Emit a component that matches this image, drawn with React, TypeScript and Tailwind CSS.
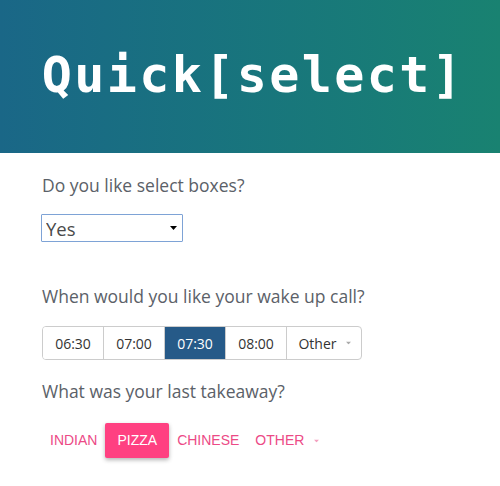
import React, { useState } from 'react';

const times = ['06:30', '07:00', '07:30', '08:00'];
const foods = ['Indian', 'Pizza', 'Chinese'];

const Caret = ({ className }: { className: string }) => (
  <svg width="7" height="4" viewBox="0 0 7 4" className={className}>
    <path d="M0 0 L7 0 L3.5 4 Z" fill="currentColor" />
  </svg>
);

export default function App() {
  const [answer, setAnswer] = useState('Yes');
  const [time, setTime] = useState('07:30');
  const [food, setFood] = useState('Pizza');

  return (
    <div className="w-[500px] h-[486px] bg-white overflow-hidden" style={{ fontFamily: '"Open Sans", sans-serif' }}>
      {/* header */}
      <div className="h-[153px] bg-gradient-to-r from-[#1a6787] to-[#198271] flex items-center justify-center">
        <h1
          className="text-white text-[50px] font-bold tracking-[2.4px] leading-none pb-[4px] pl-[6px]"
          style={{ fontFamily: '"DejaVu Sans Mono", monospace' }}
        >
          Quick[select]
        </h1>
      </div>

      <div className="px-[42px] pt-[20px] text-[#5b6168]">
        {/* select box */}
        <p className="text-[17.5px] leading-[24px]">Do you like select boxes?</p>
        <div className="relative mt-[17px] w-[142px] h-[28px] border border-[#7ea3d6] rounded-[1px] -ml-[1px]">
          <select
            value={answer}
            onChange={(e) => setAnswer(e.target.value)}
            className="w-full h-full appearance-none bg-transparent pl-[4px] text-[18.5px] text-[#4a4a4a] outline-none"
          >
            <option>Yes</option>
            <option>No</option>
          </select>
          <Caret className="absolute right-[5px] top-[11px] text-black pointer-events-none" />
        </div>

        {/* button group */}
        <p className="text-[17.5px] leading-[24px] mt-[42px]">When would you like your wake up call?</p>
        <div className="flex mt-[18px] w-fit border border-[#ccc] rounded-[4px] overflow-hidden">
          {times.map((t, i) => (
            <button
              key={t}
              onClick={() => setTime(t)}
              className={
                'h-[32px] text-[14px] ' +
                (i > 0 ? 'w-[61px] border-l border-[#ccc] ' : 'w-[60px] ') +
                (time === t ? 'bg-[#265a88] text-white border-[#265a88]' : 'bg-white text-[#333]')
              }
            >
              {t}
            </button>
          ))}
          <button className="w-[75px] h-[32px] border-l border-[#ccc] text-[14px] text-[#333] flex items-center justify-center gap-[8px] pl-[2px]">
            Other
            <Caret className="text-[#aaa] scale-75" />
          </button>
        </div>

        {/* flat buttons */}
        <p className="text-[17.5px] leading-[24px] mt-[19px]">What was your last takeaway?</p>
        <div className="flex items-center mt-[20px]" style={{ fontFamily: '"Liberation Sans", Arial, sans-serif' }}>
          {foods.map((f) => (
            <button
              key={f}
              onClick={() => setFood(f)}
              className={
                'h-[35px] uppercase text-[14px] rounded-[2px] ' +
                (food === f ? 'bg-[#ff4081] text-white shadow-[0_2px_4px_rgba(0,0,0,0.3)] px-[12px]' : 'text-[#ec4a86] px-[8px]')
              }
            >
              {f}
            </button>
          ))}
          <button className="h-[35px] px-[8px] uppercase text-[14px] text-[#ec4a86] flex items-center gap-[9px]">
            Other
            <Caret className="text-[#f3a0bf] scale-75" />
          </button>
        </div>
      </div>
    </div>
  );
}
